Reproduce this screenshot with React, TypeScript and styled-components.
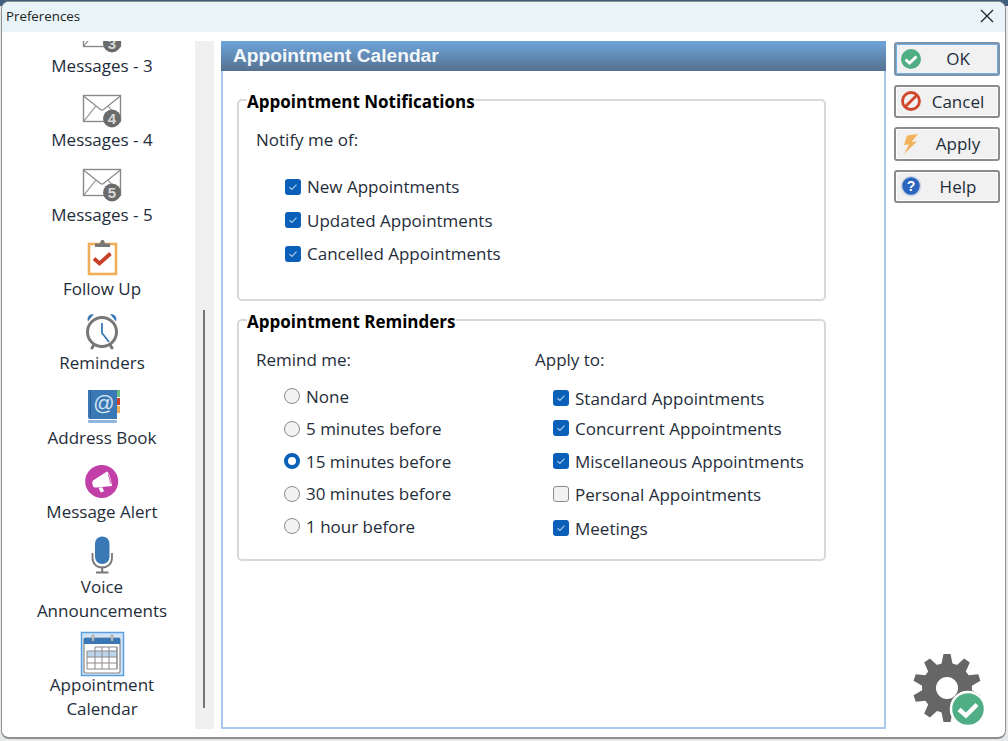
import type { ReactNode } from "react";
import styled, { createGlobalStyle } from "styled-components";

const BLUE = "#3a78b5";
const GREY = "#777";
const GREEN = "#4fae84";

const GlobalStyle = createGlobalStyle`
  html, body {
    margin: 0;
    padding: 0;
    height: 100%;
    overflow: hidden;
  }
  body {
    background: #e6e8ea;
    font-family: "Open Sans", "Noto Sans", sans-serif;
    color: #1f2d3a;
  }
`;

/* 사이드바 아이콘들: viewBox 44x50, 라벨 바로 위에 붙는다 */
const Envelope = ({ n }: { n: number }) => (
  <svg width="44" height="50" viewBox="0 0 44 50">
    <rect x="3.5" y="17.5" width="37" height="26" fill="#fff" stroke="#8a8a8a" strokeWidth="1.4" />
    <path d="M3.5 18l17 13.5c1 .8 2 .8 3 0l17-13.5M3.5 43.5l12-15M40.5 43.5l-12-15" fill="none" stroke="#8a8a8a" strokeWidth="1.2" />
    <circle cx="32" cy="40.5" r="9" fill="#6b6b6b" />
    <text x="32" y="46" fontSize="15" fontWeight="700" fill="#d8d8d8" textAnchor="middle" fontFamily="Liberation Sans, sans-serif">
      {n}
    </text>
  </svg>
);

const FollowUpIcon = () => (
  <svg width="44" height="50" viewBox="0 0 44 50">
    <rect x="9" y="17" width="27" height="30" fill="#fff" stroke="#f0ad5a" strokeWidth="2.6" />
    <path d="M15 20v-3.5h5c.3-2.4 1.4-3.8 2.5-3.8s2.2 1.4 2.5 3.8h5V20z" fill={GREY} />
    <path d="M14 31.500l5.500 5L30.500 26.500" fill="none" stroke="#c8402a" strokeWidth="3.800" />
  </svg>
);

const ClockIcon = () => (
  <svg width="44" height="50" viewBox="0 0 44 50">
    <path d="M8 20.500c-1.500-4 1-7.500 6-7.500zM36 20.500c1.500-4-1-7.500-6-7.500z" fill={BLUE} />
    <path d="M12 47l3-5M32 47l-3-5" stroke={GREY} strokeWidth="3" strokeLinecap="round" />
    <circle cx="22" cy="31" r="14.500" fill="#fff" stroke={GREY} strokeWidth="3" />
    <path d="M22 22v10l7 9" fill="none" stroke={BLUE} strokeWidth="1.800" />
  </svg>
);

const BookIcon = () => (
  <svg width="44" height="50" viewBox="0 0 44 50">
    <rect x="37" y="15" width="3" height="7" fill="#6cbf84" />
    <rect x="37" y="23" width="3" height="7" fill="#c8402a" />
    <rect x="37" y="31" width="3" height="7" fill="#f0ad5a" />
    <path d="M8 15h29v29H10c-1.200 0-2-.8-2-2z" fill={BLUE} />
    <rect x="8" y="45" width="29" height="3" rx="1" fill="#8fb6da" />
    <rect x="10" y="15" width="1" height="29" fill="#2b5f94" />
    <text x="24" y="35" fontSize="21" fill="#d5e4f2" textAnchor="middle" fontFamily="Liberation Sans, sans-serif">
      @
    </text>
  </svg>
);

const AlertIcon = () => (
  <svg width="44" height="50" viewBox="0 0 44 50">
    <circle cx="21.700" cy="31.400" r="16.500" fill="#c23fa8" />
    <path d="M13 30.500L27 21.500c1.800 1 4.200 7 5 14.500L16.500 37.500c-1.500.2-3 0-3.800-2.300-.6-1.800-.5-3.600.3-4.700z" fill="#fff" />
    <path d="M28.200 24.500c1 2.500 1.900 5.500 2.300 9" fill="none" stroke="#c23fa8" strokeWidth=".9" />
    <path d="M18.500 37.800l2.300 4.700 3.300-1.200-1.800-4z" fill="#fff" />
  </svg>
);

const MicIcon = () => (
  <svg width="44" height="50" viewBox="0 0 44 50">
    <rect x="15" y="12.500" width="14.500" height="27.500" rx="7.200" fill={BLUE} />
    <path d="M12.500 29v5c0 5.500 4 9.500 9.700 9.500s9.800-4 9.800-9.500v-5" fill="none" stroke={GREY} strokeWidth="1.800" />
    <path d="M22.200 43.500V48M16 48.500h12.500" fill="none" stroke={GREY} strokeWidth="2" />
  </svg>
);

const CalendarIcon = () => (
  <svg width="44" height="50" viewBox="0 0 44 50" style={{ overflow: "visible" }}>
    <rect x="1.500" y="9.500" width="42" height="43" fill="#cfe4f8" stroke="#5aa0e0" strokeWidth="1.500" />
    <rect x="4" y="15" width="36" height="35" rx="1.500" fill="#fff" stroke="#8a8a8a" strokeWidth="1.200" />
    <rect x="4" y="15" width="36" height="6" fill={BLUE} />
    <rect x="12" y="12" width="2" height="6" fill="#ccc" stroke="#888" strokeWidth=".5" />
    <rect x="31" y="12" width="2" height="6" fill="#ccc" stroke="#888" strokeWidth=".5" />
    <rect x="7" y="28" width="30" height="6" fill="#bcd6ee" />
    <path d="M15 24h22v22H7V28h30M7 34h30M7 40h30M15 24v22M22 24v22M29 24v22M37 24v22" fill="none" stroke="#8a8a8a" strokeWidth="1" />
  </svg>
);

const Check = () => (
  <svg width="16" height="16" viewBox="0 0 16 16">
    <rect width="16" height="16" rx="3" fill="#0a5fb8" />
    <path d="M4.500 8.200l2.400 2.300 4.600-4.800" fill="none" stroke="#a9c9ea" strokeWidth="1.200" />
  </svg>
);

const OkIcon = () => (
  <svg width="22" height="22" viewBox="0 0 22 22">
    <circle cx="11" cy="11" r="10" fill={GREEN} />
    <path d="M5.500 11.500l4 3.500 7-6.500" fill="none" stroke="#fff" strokeWidth="2.800" />
  </svg>
);

const CancelIcon = () => (
  <svg width="22" height="22" viewBox="0 0 22 22">
    <circle cx="11" cy="11" r="8.500" fill="none" stroke="#d0472c" strokeWidth="2.800" />
    <path d="M5 17L17 5" stroke="#d0472c" strokeWidth="2.800" />
  </svg>
);

const ApplyIcon = () => (
  <svg width="22" height="22" viewBox="0 0 22 22">
    <path d="M18 1L7 2.500 4 12l5-.5L4 21 17 8.500l-5.500.5z" fill="#f2b35c" />
  </svg>
);

const HelpIcon = () => (
  <svg width="22" height="22" viewBox="0 0 22 22">
    <circle cx="11" cy="11" r="9.500" fill="#2a66c0" stroke="#c8d4e4" strokeWidth="1.500" />
    <text x="11" y="16" fontSize="14" fontWeight="700" fill="#fff" textAnchor="middle" fontFamily="Liberation Sans, sans-serif">
      ?
    </text>
  </svg>
);

const GearBadge = () => {
  const teeth = Array.from({ length: 10 }, (_, i) => i * 36);
  return (
    <svg width="74" height="73" viewBox="0 0 74 73">
      <g fill="#666">
        {teeth.map((deg) => (
          <path key={deg} d="M30.500 0h7l2.500 12H28z" transform={`rotate(${deg} 34 34)`} />
        ))}
      </g>
      <circle cx="34" cy="34" r="18" fill="none" stroke="#666" strokeWidth="14" />
      <circle cx="55" cy="55" r="17" fill={GREEN} stroke="#fff" strokeWidth="2.500" />
      <path d="M46 55.500l7 6 11-11" fill="none" stroke="#fff" strokeWidth="4.500" />
    </svg>
  );
};

interface NavItem {
  label: string;
  icon: ReactNode;
}

const NAV_ITEMS: NavItem[] = [
  { label: "Messages - 3", icon: <Envelope n={3} /> },
  { label: "Messages - 4", icon: <Envelope n={4} /> },
  { label: "Messages - 5", icon: <Envelope n={5} /> },
  { label: "Follow Up", icon: <FollowUpIcon /> },
  { label: "Reminders", icon: <ClockIcon /> },
  { label: "Address Book", icon: <BookIcon /> },
  { label: "Message Alert", icon: <AlertIcon /> },
  { label: "Voice\nAnnouncements", icon: <MicIcon /> },
  { label: "Appointment\nCalendar", icon: <CalendarIcon /> },
];

const BUTTONS = [
  { label: "OK", icon: <OkIcon />, focused: true },
  { label: "Cancel", icon: <CancelIcon /> },
  { label: "Apply", icon: <ApplyIcon /> },
  { label: "Help", icon: <HelpIcon /> },
];

const NOTIFY = ["New Appointments", "Updated Appointments", "Cancelled Appointments"];
const REMIND = ["None", "5 minutes before", "15 minutes before", "30 minutes before", "1 hour before"];
const APPLY_TO = [
  { label: "Standard Appointments", checked: true, height: 28 },
  { label: "Concurrent Appointments", checked: true, height: 32 },
  { label: "Miscellaneous Appointments", checked: true, height: 34 },
  { label: "Personal Appointments", checked: false, height: 32 },
  { label: "Meetings", checked: true, height: 36 },
];

const App = () => (
  <Desktop>
    <GlobalStyle />
    <Window>
      <TitleBar>
        <Title>Preferences</Title>
        <CloseIcon viewBox="0 0 14 14">
          <path d="M1 1l12 12M13 1L1 13" stroke="#222" strokeWidth="1.300" fill="none" />
        </CloseIcon>
      </TitleBar>
      <Body>
        <Sidebar>
          {NAV_ITEMS.map((item) => (
            <NavEntry key={item.label}>
              <IconSlot>{item.icon}</IconSlot>
              <NavLabel>{item.label}</NavLabel>
            </NavEntry>
          ))}
        </Sidebar>
        <ScrollTrack>
          <ScrollThumb />
        </ScrollTrack>
        <Panel>
          <PanelHeader>Appointment Calendar</PanelHeader>
          <PanelBody>
            <Group $height={213}>
              <GroupTitle>Appointment Notifications</GroupTitle>
              <Prompt>Notify me of:</Prompt>
              <OptionList $top={18} $indent={29}>
                {NOTIFY.map((label) => (
                  <Option key={label} $height={33.5}>
                    <Check />
                    {label}
                  </Option>
                ))}
              </OptionList>
            </Group>
            <Group $height={253}>
              <GroupTitle>Appointment Reminders</GroupTitle>
              <Columns>
                <div>
                  <Prompt>Remind me:</Prompt>
                  <OptionList $top={8} $indent={28}>
                    {REMIND.map((label, i) => (
                      <Option key={label} $height={32.5}>
                        <Radio $selected={i === 2} />
                        {label}
                      </Option>
                    ))}
                  </OptionList>
                </div>
                <div>
                  <Prompt>Apply to:</Prompt>
                  <OptionList $top={12} $indent={18}>
                    {APPLY_TO.map((opt) => (
                      <Option key={opt.label} $height={opt.height}>
                        {opt.checked ? <Check /> : <EmptyBox />}
                        {opt.label}
                      </Option>
                    ))}
                  </OptionList>
                </div>
              </Columns>
            </Group>
          </PanelBody>
        </Panel>
        <ActionColumn>
          {BUTTONS.map((btn) => (
            <ActionButton key={btn.label} $focused={btn.focused}>
              <ButtonIcon>{btn.icon}</ButtonIcon>
              <ButtonLabel>{btn.label}</ButtonLabel>
            </ActionButton>
          ))}
          <GearSlot>
            <GearBadge />
          </GearSlot>
        </ActionColumn>
      </Body>
    </Window>
  </Desktop>
);

export default App;

const Desktop = styled.div`
  width: 1008px;
  height: 741px;
  box-sizing: border-box;
  padding: 1px 2px 2px 1px;
  background: linear-gradient(#3f5f80 0 6px, #e6e8ea 6px);
`;

const Window = styled.div`
  height: 100%;
  box-sizing: border-box;
  display: flex;
  flex-direction: column;
  background: #fff;
  border: 1px solid #8f8f8f;
  border-bottom-width: 2px;
  border-radius: 8px;
  overflow: hidden;
`;

const TitleBar = styled.div`
  flex: none;
  height: 30px;
  display: flex;
  align-items: center;
  justify-content: space-between;
  padding: 0 11px 3px 4px;
  box-sizing: border-box;
  background: #e8f4f8;
`;

const Title = styled.span`
  font-size: 13.300px;
  color: #222;
`;

const CloseIcon = styled.svg`
  width: 14px;
  height: 14px;
`;

const Body = styled.div`
  flex: 1;
  min-height: 0;
  display: flex;
  padding: 9px 0 8px 0;
`;

const Sidebar = styled.nav`
  flex: none;
  width: 193px;
  display: flex;
  flex-direction: column;
  justify-content: flex-end;
  align-items: center;
  overflow: hidden;
  padding: 0 0 8px 7px;
  box-sizing: border-box;
`;

const NavEntry = styled.div`
  flex: none;
  width: 100%;
  display: flex;
  flex-direction: column;
  align-items: center;
`;

const IconSlot = styled.div`
  width: 44px;
  height: 50.4px;
`;

const NavLabel = styled.div`
  font-size: 17px;
  line-height: 24px;
  text-align: center;
  white-space: pre-line;
`;

const ScrollTrack = styled.div`
  flex: none;
  width: 19px;
  margin-right: 7px;
  background: #f0f0f0;
  display: flex;
  justify-content: center;
  align-items: flex-end;
  padding: 0 1px 21px 0;
  box-sizing: border-box;
`;

const ScrollThumb = styled.div`
  width: 2px;
  height: 398px;
  background: #777;
`;

const Panel = styled.section`
  flex: none;
  width: 665px;
  box-sizing: border-box;
  border: 2px solid #a9c8ec;
  border-top: 0;
  display: flex;
  flex-direction: column;
`;

const PanelHeader = styled.header`
  flex: none;
  height: 30px;
  margin: 0 -2px;
  padding: 0 12px;
  display: flex;
  align-items: center;
  background: linear-gradient(#6fa5dc, #55718f);
  color: #f4f8fc;
  font-family: "Liberation Sans", sans-serif;
  font-weight: 700;
  font-size: 19.200px;
`;

const PanelBody = styled.div`
  padding: 17px 58px 0 14px;
  display: flex;
  flex-direction: column;
  gap: 7px;
`;

const Group = styled.fieldset<{ $height: number }>`
  height: ${({ $height }) => $height}px;
  box-sizing: border-box;
  margin: 0;
  min-width: 0;
  padding: 0 17px;
  border: 2px solid #d8d8d8;
  border-radius: 5px;
`;

const GroupTitle = styled.legend`
  position: relative;
  top: 1.500px;
  padding: 0;
  margin-left: -9px;
  font-size: 17px;
  line-height: 24px;
  font-weight: 700;
  color: #000;
`;

const Prompt = styled.div`
  font-size: 17px;
  line-height: 24px;
  margin-top: 16px;
`;

const OptionList = styled.div<{ $top: number; $indent: number }>`
  margin: ${({ $top }) => $top}px 0 0 ${({ $indent }) => $indent}px;
`;

const Option = styled.div<{ $height: number }>`
  height: ${({ $height }) => $height}px;
  display: flex;
  align-items: center;
  gap: 6px;
  font-size: 17px;
  white-space: nowrap;
`;

const Radio = styled.span<{ $selected: boolean }>`
  flex: none;
  width: 16px;
  height: 16px;
  box-sizing: border-box;
  border-radius: 50%;
  background: ${({ $selected }) => ($selected ? "#fff" : "#f2f2f2")};
  border: ${({ $selected }) => ($selected ? "4px solid #0a5fb8" : "1.500px solid #8a8a8a")};
`;

const EmptyBox = styled.span`
  flex: none;
  width: 16px;
  height: 16px;
  box-sizing: border-box;
  border-radius: 3px;
  background: #f2f2f2;
  border: 1.500px solid #8a8a8a;
`;

const Columns = styled.div`
  display: grid;
  grid-template-columns: 279px 1fr;
`;

const ActionColumn = styled.aside`
  flex: 1;
  display: flex;
  flex-direction: column;
  gap: 9px;
  padding: 1px 5px 0 8px;
`;

const ActionButton = styled.button<{ $focused?: boolean }>`
  height: 33.500px;
  padding: 0 4px;
  display: flex;
  align-items: center;
  box-sizing: border-box;
  background: #f1f1f1;
  border: 2px solid ${({ $focused }) => ($focused ? "#7e93a8" : "#8c8c8c")};
  box-shadow: ${({ $focused }) => ($focused ? "inset 0 0 0 1px #6fb0ea" : "inset 0 0 0 1px #fff")};
  border-radius: 3px;
  font-family: inherit;
  font-size: 17px;
  color: #1f2d3a;
`;

const ButtonIcon = styled.span`
  flex: none;
  width: 22px;
  height: 22px;
  display: flex;
`;

const ButtonLabel = styled.span`
  flex: 1;
  text-align: center;
`;

const GearSlot = styled.div`
  margin: auto 0 2px 19px;
  display: flex;
`;
